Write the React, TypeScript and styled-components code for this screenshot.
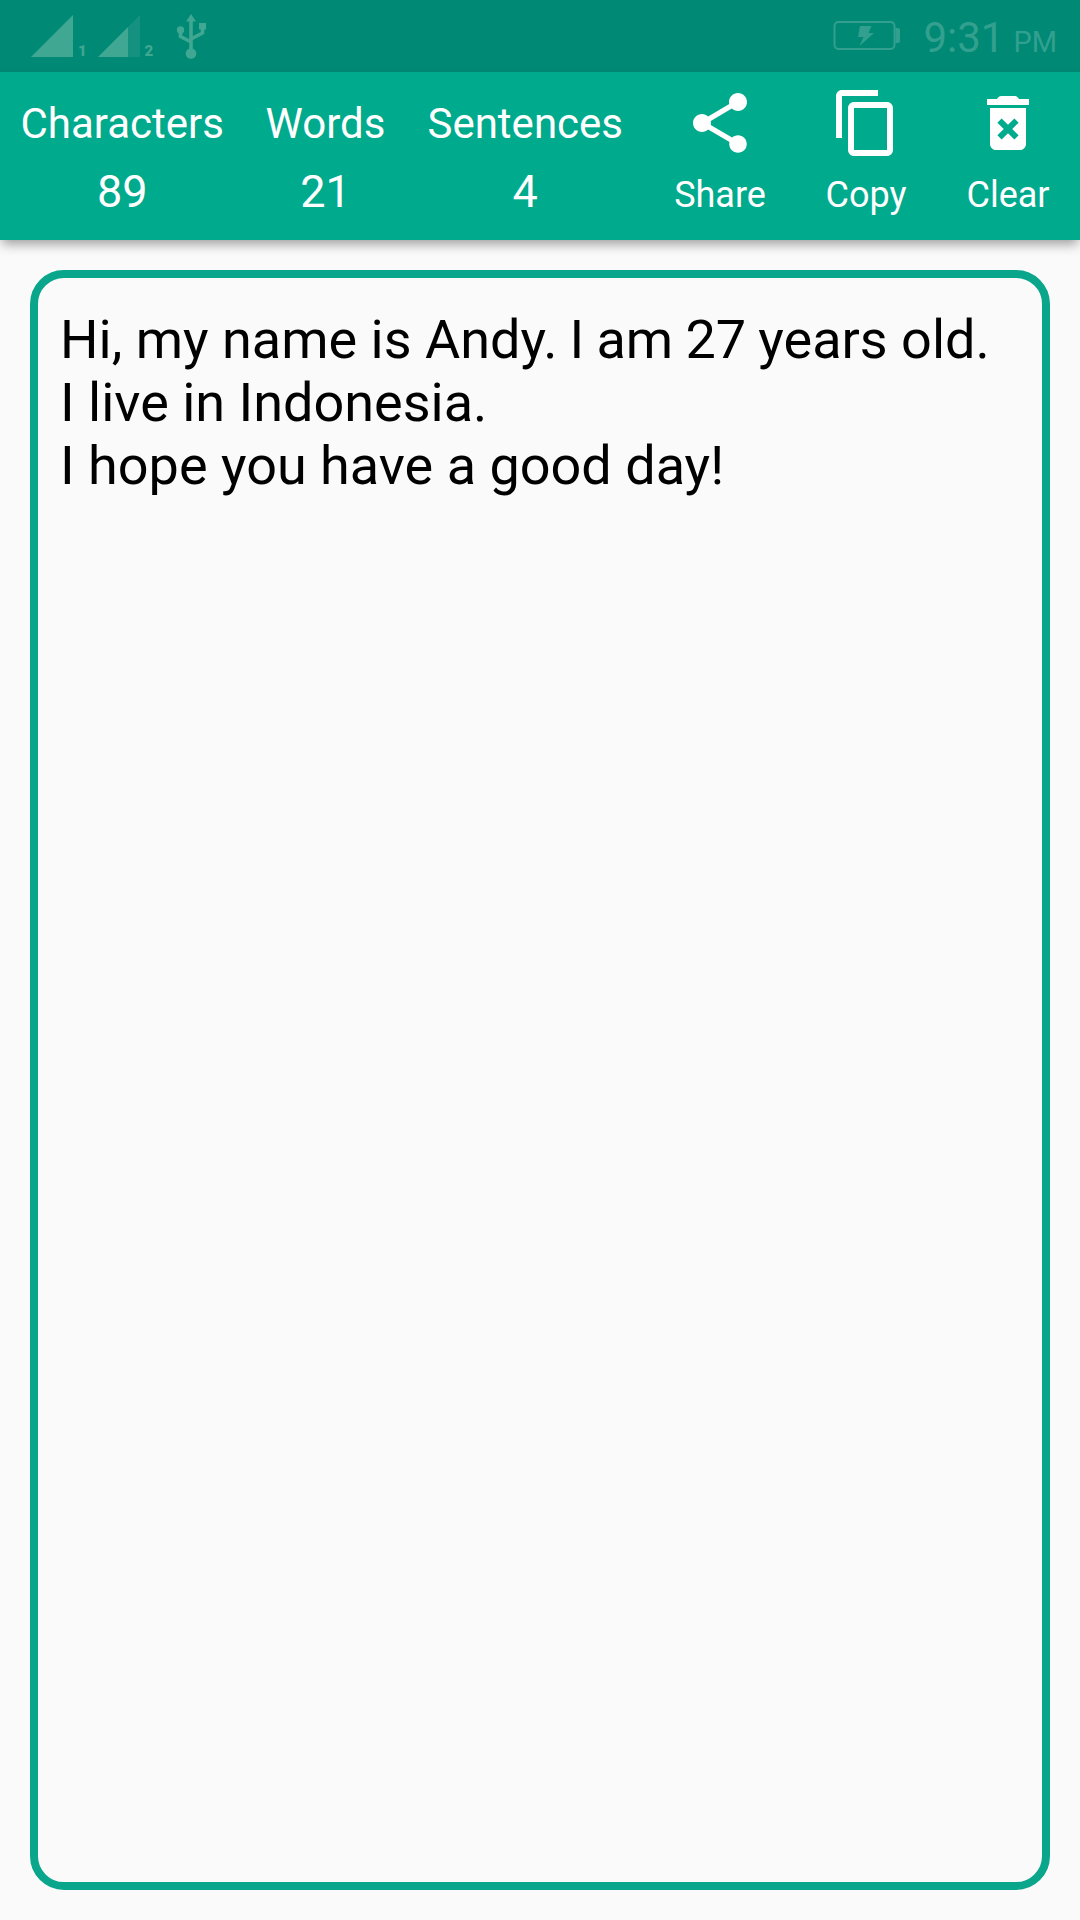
import React from "react";
import styled, { createGlobalStyle } from "styled-components";

const GlobalStyle = createGlobalStyle`
  body {
    margin: 0;
    background: #fafafa;
    font-family: Roboto, "Noto Sans", sans-serif;
  }
`;

const Screen = styled.div`
  display: flex;
  flex-direction: column;
  box-sizing: border-box;
  width: 1080px;
  height: 1920px;
  overflow: hidden;
  background: #fafafa;
`;

const StatusBar = styled.header`
  display: flex;
  flex: none;
  justify-content: space-between;
  height: 72px;
  background: #008975;
`;

const StatusIcons = styled.svg`
  display: block;
  width: 220px;
  height: 72px;
`;

const StatusRight = styled.div`
  display: flex;
  align-items: baseline;
  box-sizing: border-box;
  padding: 13px 23px 0 0;
  color: #33a08f;
`;

const Battery = styled.svg`
  display: block;
  width: 68px;
  height: 32px;
  margin-right: 22px;
  align-self: flex-start;
  margin-top: 7px;
`;

const Clock = styled.span`
  font-size: 42px;
  line-height: 49px;
  font-weight: 400;
`;

const Meridiem = styled.span`
  margin-left: 9px;
  font-size: 29px;
  font-weight: 400;
`;

const Toolbar = styled.section`
  display: grid;
  flex: none;
  grid-template-columns: 244.5px 162px 237.5px 152px 140px 144px;
  height: 168px;
  background: #00aa8d;
  box-shadow: 0 6px 11px -2px rgba(0, 0, 0, 0.38);
  color: #fff;
`;

const Stat = styled.div`
  display: flex;
  flex-direction: column;
  align-items: center;
  padding-top: 27px;
`;

const StatLabel = styled.span`
  font-size: 42px;
  line-height: 50px;
  white-space: nowrap;
`;

const StatValue = styled.span`
  margin-top: 16px;
  font-size: 45px;
  line-height: 54px;
`;

const Action = styled.button`
  display: flex;
  flex-direction: column;
  align-items: center;
  padding: 15px 0 0;
  border: 0;
  background: none;
  color: inherit;
  font: inherit;
`;

const ActionIcon = styled.svg`
  display: block;
  width: 72px;
  height: 72px;
  fill: currentColor;
`;

const ActionLabel = styled.span`
  margin-top: 14px;
  font-size: 36px;
  line-height: 44px;
`;

const Editor = styled.main`
  flex: 1;
  box-sizing: border-box;
  margin: 30px;
  padding: 30px 22px;
  border: 8px solid #0aa68c;
  border-radius: 34px;
  color: #000;
`;

const Line = styled.p`
  margin: 0;
  font-size: 54px;
  line-height: 63px;
  white-space: nowrap;
`;

const Tight = styled.span`
  word-spacing: -1.2px;
`;

const stats = [
  { label: "Characters", value: 89 },
  { label: "Words", value: 21 },
  { label: "Sentences", value: 4 },
];

const actions = [
  {
    label: "Share",
    path: "M18 16.08c-.76 0-1.44.3-1.96.77L8.91 12.7c.05-.23.09-.46.09-.7s-.04-.47-.09-.7l7.05-4.11c.54.5 1.25.81 2.04.81 1.66 0 3-1.34 3-3s-1.34-3-3-3-3 1.34-3 3c0 .24.04.47.09.7L8.04 9.81C7.5 9.31 6.79 9 6 9c-1.66 0-3 1.34-3 3s1.34 3 3 3c.79 0 1.5-.31 2.04-.81l7.12 4.16c-.05.21-.08.43-.08.65 0 1.61 1.31 2.92 2.92 2.92 1.61 0 2.92-1.31 2.92-2.92s-1.31-2.92-2.92-2.92z",
  },
  {
    label: "Copy",
    path: "M16 1H4c-1.1 0-2 .9-2 2v14h2V3h12V1zm3 4H8c-1.1 0-2 .9-2 2v14c0 1.1.9 2 2 2h11c1.1 0 2-.9 2-2V7c0-1.1-.9-2-2-2zm0 16H8V7h11v14z",
  },
  {
    label: "Clear",
    path: "M6 19c0 1.1.9 2 2 2h8c1.1 0 2-.9 2-2V7H6v12zm2.46-7.12l1.41-1.41L12 12.59l2.12-2.12 1.41 1.41L13.41 14l2.12 2.12-1.41 1.41L12 15.41l-2.12 2.12-1.41-1.41L10.59 14l-2.13-2.12zM15.7 4c-.5-.7-.8-1-1.5-1H9.8c-.7 0-1 .3-1.5 1H5v2h14V4z",
  },
];

export default function App() {
  return (
    <>
      <GlobalStyle />
      <Screen>
        <StatusBar>
          <StatusIcons viewBox="0 0 220 72" fill="#40a793">
            <path d="M31 57L73 15V57Z" />
            <text x="78" y="56" fontSize="15" fontWeight="900">1</text>
            <path d="M128 27L140 15V57H128Z" fill="#159180" />
            <path d="M98 57L128 27V57Z" />
            <text x="144.500" y="56" fontSize="15" fontWeight="900">2</text>
            <g fill="none" stroke="#40a793" strokeWidth="3.600">
              <path d="M191 20V52" />
              <path d="M180.500 30V36.500L191 42" />
              <path d="M202.500 26V33L191 39" />
            </g>
            <path d="M191 14L196 21.500H186Z" />
            <circle cx="180.500" cy="30" r="3.700" />
            <rect x="199" y="23" width="7" height="6.500" />
            <circle cx="191" cy="53.500" r="5.300" />
          </StatusIcons>
          <StatusRight>
            <Battery viewBox="0 0 68 32">
              <rect x="1.500" y="2" width="60" height="27" rx="4" fill="none" stroke="#33a08f" strokeWidth="2" />
              <path d="M62.500 8H65Q67 8 67 10V21Q67 23 65 23H62.500Z" fill="#33a08f" />
              <path d="M27 6H38.500L35.500 13H41L26.500 26L30.500 17H25Z" fill="#33a08f" />
            </Battery>
            <Clock>9:31</Clock>
            <Meridiem>PM</Meridiem>
          </StatusRight>
        </StatusBar>
        <Toolbar>
          {stats.map(({ label, value }) => (
            <Stat key={label}>
              <StatLabel>{label}</StatLabel>
              <StatValue>{value}</StatValue>
            </Stat>
          ))}
          {actions.map(({ label, path }) => (
            <Action key={label} type="button">
              <ActionIcon viewBox="0 0 24 24">
                <path d={path} />
              </ActionIcon>
              <ActionLabel>{label}</ActionLabel>
            </Action>
          ))}
        </Toolbar>
        <Editor>
          <Line>
            Hi, my name is Andy.<Tight> I am 27 </Tight>years old.
          </Line>
          <Line>I live in Indonesia.</Line>
          <Line>I hope you have a good day!</Line>
        </Editor>
      </Screen>
    </>
  );
}
